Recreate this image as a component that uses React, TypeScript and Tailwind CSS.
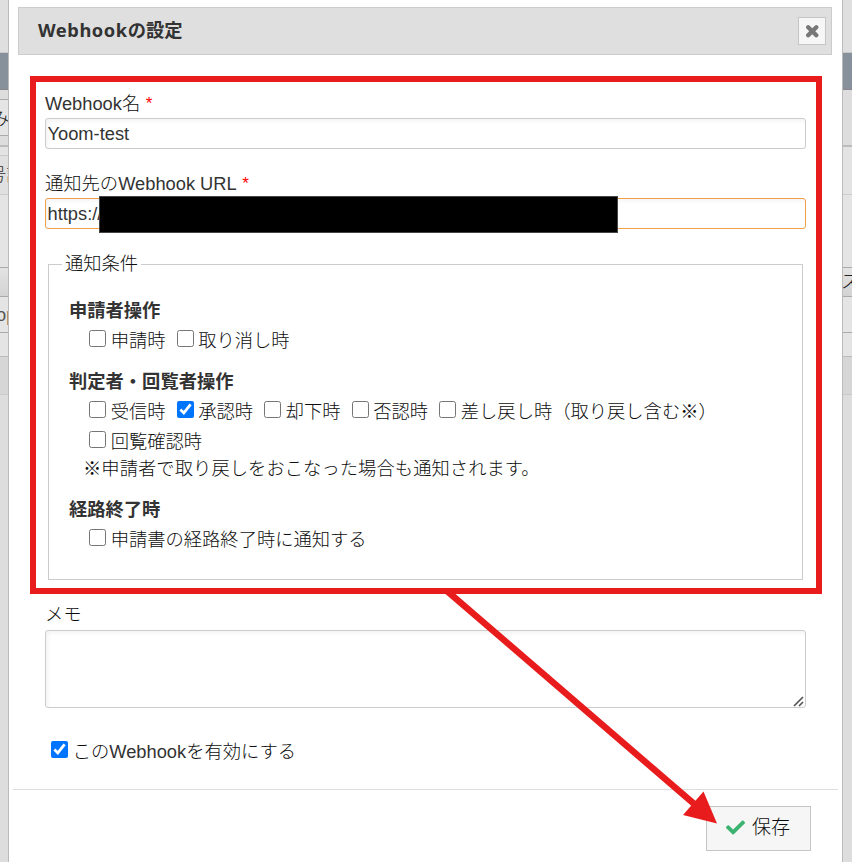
import React from "react";
import { FaCheck } from "react-icons/fa";

type Band = { h: number; cls: string; text?: string; textCls?: string };

const leftBands: Band[] = [
  { h: 53, cls: "bg-[#dfdfdf] border-b border-[#c8c8c8]" },
  { h: 37, cls: "bg-[#87919c] border-b border-[#8a8689]" },
  { h: 10, cls: "bg-[#dddddd] border-b border-[#aaaaaa]" },
  { h: 36, cls: "bg-[#e5e5e5] border-b border-[#aaaaaa]", text: "み", textCls: "-ml-[9px] pt-0.5 text-[#111]" },
  { h: 11, cls: "bg-[#dddddd] border-b-2 border-[#bcbcbc]" },
  { h: 9, cls: "bg-[#e3e3e3] border-b border-[#c8c8c8]" },
  { h: 39, cls: "bg-[#e0e0e0] border-b border-[#cccccc]", text: "号計", textCls: "-ml-[12px] text-[#333]" },
  { h: 73, cls: "bg-[#e4e4e4] border-b border-[#aaaaaa]" },
  { h: 29, cls: "bg-linear-to-b from-[#e3e3e3] to-[#d3d3d3] border-b border-[#aaaaaa]" },
  { h: 36, cls: "bg-[#e4e4e4] border-b border-[#aaaaaa]", text: "op", textCls: "-ml-[4px] text-[#555]" },
  { h: 24, cls: "bg-[#e4e4e4] border-b border-[#bbbbbb]" },
  { h: 38, cls: "bg-[#d6d6d6] border-b border-[#cacaca]" },
  { h: 467, cls: "bg-[#dddddd]" },
];

const rightBands: Band[] = [
  { h: 53, cls: "bg-[#dfdfdf] border-b border-[#c8c8c8]" },
  { h: 37, cls: "bg-[#87919c] border-b border-[#8a8689]" },
  { h: 57, cls: "bg-[#dddddd] border-b-2 border-[#bcbcbc]" },
  { h: 48, cls: "bg-[#e3e3e3] border-b border-[#cccccc]" },
  { h: 73, cls: "bg-[#e4e4e4] border-b border-[#aaaaaa]" },
  { h: 29, cls: "bg-linear-to-b from-[#e3e3e3] to-[#d3d3d3] border-b border-[#aaaaaa]", text: "ス", textCls: "-ml-[2px] text-[#222]" },
  { h: 36, cls: "bg-[#e4e4e4] border-b border-[#aaaaaa]" },
  { h: 24, cls: "bg-[#e4e4e4] border-b border-[#bbbbbb]" },
  { h: 38, cls: "bg-[#d6d6d6] border-b border-[#cacaca]" },
  { h: 467, cls: "bg-[#dddddd]" },
];

function Strip({ bands, side }: { bands: Band[]; side: "left" | "right" }) {
  return (
    <div className={side === "left" ? "w-2 shrink-0 overflow-hidden" : "w-[9px] shrink-0 overflow-hidden"}>
      {bands.map((b, i) => (
        <div key={i} style={{ height: b.h }} className={`flex items-center overflow-hidden ${b.cls}`}>
          {b.text && <span className={`whitespace-nowrap ${b.textCls}`}>{b.text}</span>}
        </div>
      ))}
    </div>
  );
}

function Check({ label, checked = false }: { label: React.ReactNode; checked?: boolean }) {
  return (
    <label className="flex items-center">
      <input type="checkbox" defaultChecked={checked} className="mr-[4.7px] mb-[4px] size-[17px]" />
      <span className="pt-px">{label}</span>
    </label>
  );
}

function Label({ children, required = false }: { children: React.ReactNode; required?: boolean }) {
  return (
    <div className="h-7 leading-7">
      {children}
      {required && <span className="ml-[5.5px] align-[1px] text-[17px] leading-none text-[#ff0000]">*</span>}
    </div>
  );
}

function Latin({ children }: { children: React.ReactNode }) {
  return <span className="text-[#333]">{children}</span>;
}

function Kome() {
  return <span className="font-['Noto_Sans_CJK_JP',sans-serif] leading-none">※</span>;
}

const inputCls =
  "block h-[31px] w-full rounded-[3px] border bg-white pl-[1.5px] text-[18.3px] text-[#333] shadow-[inset_2px_2px_4px_#0000000d] outline-none";

export default function App() {
  return (
    <div className="relative flex h-[862px] w-[852px] overflow-hidden font-['Liberation_Sans','Noto_Sans_CJK_JP',sans-serif] text-[18.3px] font-light text-[#0c0c0c]">
      <Strip bands={leftBands} side="left" />

      <main className="flex w-[835px] shrink-0 flex-col border-x border-[#bbbbbb] bg-white">
        <header className="mt-[7px] mr-[10px] ml-[9px] flex h-12 items-center justify-between border border-[#cccccc] bg-[#dfdfdf] pr-[5px] pl-[19px]">
          <h1 className="pb-[2px] font-['Noto_Sans','Noto_Sans_CJK_JP',sans-serif] text-[18.3px] font-bold text-[#333]">
            <span className="tracking-[0.55px]">Webhook</span>の設定
          </h1>
          <button className="flex size-7 items-center justify-center border border-[#c5c5c5] bg-[#f6f6f6]">
            <svg width="14" height="14" viewBox="0 0 14 14">
              <path d="M3.200 3.200 11.300 11.300M11.300 3.200 3.200 11.300" stroke="#777" strokeWidth="4.300" strokeLinecap="round" />
            </svg>
          </button>
        </header>

        <form className="mt-[35px] ml-9 w-[761px]">
          <Label required><Latin>Webhook</Latin>名</Label>
          <input className={`${inputCls} border-[#cccccc]`} defaultValue="Yoom-test" />

          <div className="mt-[21px]">
            <Label required>通知先の<Latin>Webhook URL</Latin></Label>
          </div>
          <div className="relative">
            <input className={`${inputCls} border-[#f0a04b]`} defaultValue="https://" />
            <div className="absolute top-[-2px] left-[54px] h-[37px] w-[519px] border border-[#444] bg-black" />
          </div>

          <fieldset className="mx-[3px] mt-[21px] h-[330px] border border-[#cccccc] pl-5">
            <legend className="-ml-[7px] h-7 px-[3px] leading-7">通知条件</legend>
            <div className="mt-[18px] h-[29px] leading-[30px] font-bold text-[#333]">申請者操作</div>
            <div className="ml-5 flex h-[30px] items-center gap-[11px]">
              <Check label="申請時" />
              <Check label="取り消し時" />
            </div>
            <div className="mt-[12px] h-[29px] leading-[30px] font-bold text-[#333]">判定者・回覧者操作</div>
            <div className="ml-5 flex h-[30px] items-center gap-[11px]">
              <Check label="受信時" />
              <Check label="承認時" checked />
              <Check label="却下時" />
              <Check label="否認時" />
              <Check label={<>差し戻し時（取り戻し含む<Kome />）</>} />
            </div>
            <div className="ml-5 flex h-[30px] items-center">
              <Check label="回覧確認時" />
            </div>
            <div className="ml-[14px] h-[25px] leading-[25px] tracking-[0.06px]">
              <Kome />申請者で取り戻しをおこなった場合も通知されます。
            </div>
            <div className="mt-[14px] h-[29px] leading-[30px] font-bold text-[#333]">経路終了時</div>
            <div className="ml-5 flex h-[30px] items-center">
              <Check label="申請書の経路終了時に通知する" />
            </div>
          </fieldset>

          <div className="mt-[21px] h-[29px] leading-[28px]">メモ</div>
          <div className="relative">
            <textarea className="block h-[78px] w-full resize-none rounded-[3px] border border-[#cccccc] shadow-[inset_2px_2px_4px_#0000000d]" />
            <svg className="absolute right-[2px] bottom-[1px]" width="11" height="11" viewBox="0 0 11 11">
              <path d="M1 10 10 1M6 10 10 6" stroke="#555" strokeWidth="1.700" />
            </svg>
          </div>
          <div className="mt-7 ml-[6px] flex h-[30px] items-center">
            <Check label={<>この<Latin>Webhook</Latin>を有効にする</>} checked />
          </div>
        </form>

        <footer className="mx-1 mt-[23px] flex justify-end border-t border-[#dddddd] pt-4 pr-[27px]">
          <button className="flex h-[45px] w-[105px] items-center border border-[#c5c5c5] bg-[#f6f6f6] pl-[19px] text-[19px]">
            <FaCheck className="mr-[7px] mb-[3px] size-[19px] text-[#3cb371]" />
            <span className="pb-px">保存</span>
          </button>
        </footer>
      </main>

      <Strip bands={rightBands} side="right" />

      <div className="pointer-events-none absolute top-[76px] left-[30px] h-[518px] w-[792px] border-6 border-[#e81c1c]" />
      <svg className="pointer-events-none absolute inset-0" width="852" height="862" viewBox="0 0 852 862">
        <path d="M447 591 698 807.300" stroke="#e81c1c" strokeWidth="6.500" />
        <path d="M717 823.500 703.500 791.500 683 815Z" fill="#e81c1c" />
      </svg>
    </div>
  );
}
